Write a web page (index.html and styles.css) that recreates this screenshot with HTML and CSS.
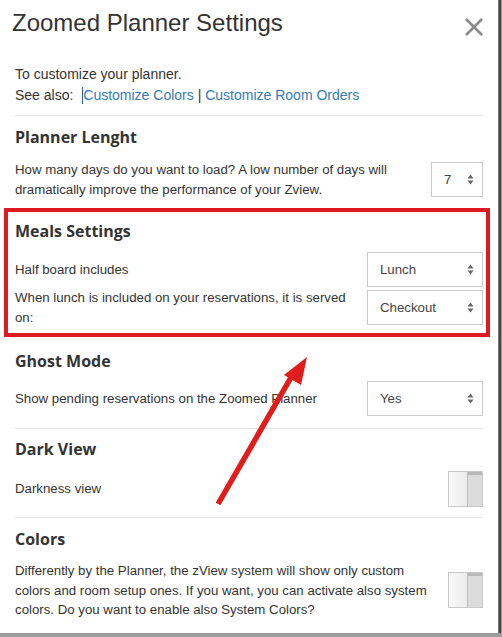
FILE: index.html
```html
<!DOCTYPE html>
<html>
<head>
<meta charset="utf-8">
<link rel="stylesheet" href="styles.css">
</head>
<body>
<div class="modal">
  <div class="modal-header">
    <h2 class="title">Zoomed Planner Settings</h2>
    <button class="close" aria-label="Close">
      <svg width="20" height="20" viewBox="0 0 20 20"><path d="M2 2 L18 18 M18 2 L2 18" stroke="#8a8a8a" stroke-width="2.6" fill="none"/></svg>
    </button>
  </div>
  <div class="modal-body">
    <div class="intro">
      <p>To customize your planner.</p>
      <p>See also: <span class="caret"></span><a href="#">Customize Colors</a> | <a href="#">Customize Room Orders</a></p>
    </div>
    <hr class="sep">
    <section class="sec sec-first">
      <h3 class="sec-title">Planner Lenght</h3>
      <div class="row">
        <div class="label">How many days do you want to load? A low number of days will dramatically improve the performance of your Zview.</div>
        <div class="select select-num"><span>7</span><svg class="arrows" width="7" height="11" viewBox="0 0 7 11"><path d="M0.5 4.5 L3.5 0.5 L6.5 4.5 Z M0.5 6.5 L3.5 10.5 L6.5 6.5 Z" fill="#666"/></svg></div>
      </div>
    </section>
    <section class="sec highlight">
      <h3 class="sec-title">Meals Settings</h3>
      <div class="row">
        <div class="label">Half board includes</div>
        <div class="select"><span>Lunch</span><svg class="arrows" width="7" height="11" viewBox="0 0 7 11"><path d="M0.5 4.5 L3.5 0.5 L6.5 4.5 Z M0.5 6.5 L3.5 10.5 L6.5 6.5 Z" fill="#666"/></svg></div>
      </div>
      <div class="row row-gap">
        <div class="label">When lunch is included on your reservations, it is served on:</div>
        <div class="select"><span>Checkout</span><svg class="arrows" width="7" height="11" viewBox="0 0 7 11"><path d="M0.5 4.5 L3.5 0.5 L6.5 4.5 Z M0.5 6.5 L3.5 10.5 L6.5 6.5 Z" fill="#666"/></svg></div>
      </div>
    </section>
    <section class="sec sec-ghost">
      <h3 class="sec-title">Ghost Mode</h3>
      <div class="row">
        <div class="label">Show pending reservations on the Zoomed Planner</div>
        <div class="select"><span>Yes</span><svg class="arrows" width="7" height="11" viewBox="0 0 7 11"><path d="M0.5 4.5 L3.5 0.5 L6.5 4.5 Z M0.5 6.5 L3.5 10.5 L6.5 6.5 Z" fill="#666"/></svg></div>
      </div>
    </section>
    <hr class="sep">
    <section class="sec sec-dark">
      <h3 class="sec-title">Dark View</h3>
      <div class="row">
        <div class="label">Darkness view</div>
        <div class="toggle"><span class="knob"></span><span class="track"></span></div>
      </div>
    </section>
    <hr class="sep">
    <section class="sec sec-colors">
      <h3 class="sec-title">Colors</h3>
      <div class="row">
        <div class="label">Differently by the Planner, the zView system will show only custom colors and room setup ones. If you want, you can activate also system colors. Do you want to enable also System Colors?</div>
        <div class="toggle"><span class="knob"></span><span class="track"></span></div>
      </div>
    </section>
  </div>
  <svg class="arrow" width="120" height="170" viewBox="0 0 120 170">
    <line x1="18" y1="174" x2="93" y2="44" stroke="#e01c1c" stroke-width="5.5"/>
    <polygon points="107,27 84,45 101,55" fill="#e01c1c"/>
  </svg>
</div>
</body>
</html>
```

FILE: styles.css
```css
* { box-sizing: border-box; }
html, body { margin: 0; padding: 0; }
body {
  background: #9c9c9c;
  width: 502px;
  height: 637px;
  overflow: hidden;
  font-family: "Liberation Sans", Arial, sans-serif;
  color: #333;
}
.modal {
  position: relative;
  width: 499px;
  height: 633px;
  background: #fff;
  border-right: 1px solid #777;
  box-shadow: 2px 0 0 #444;
}
.modal-header {
  display: flex;
  justify-content: space-between;
  align-items: flex-start;
  padding: 10px 14px 0 12px;
}
.title {
  margin: 0;
  font-size: 24px;
  line-height: 26px;
  font-weight: normal;
  color: #333;
}
.close {
  border: 0;
  background: none;
  padding: 0;
  margin-top: 7px;
  width: 20px;
  height: 20px;
  display: block;
}
.close svg { display: block; }
.modal-body {
  padding: 0 15px;
}
.intro {
  margin-top: 27px;
  font-size: 14px;
  line-height: 21px;
}
.intro p { margin: 0; }
.intro a { color: #337ab7; text-decoration: none; }
.caret {
  display: inline-block;
  width: 1px;
  height: 17px;
  margin-left: 5px;
  background: #2a5d9a;
  vertical-align: -4px;
}
.sep {
  margin: 9px 0 0;
  border: 0;
  border-top: 1px solid #e3e3e3;
  height: 0;
}
.sec {
  padding: 10px 0 0;
}
.sec-title {
  margin: 0 0 10px;
  font-family: "Open Sans", sans-serif;
  font-weight: 700;
  font-size: 16px;
  line-height: 22px;
  color: #333;
}
.sec-first .sec-title { margin-bottom: 12px; }
.row {
  display: flex;
  align-items: center;
  min-height: 35px;
}
.row-gap {
  margin-top: 1px;
  align-items: flex-start;
}
.row-gap .select { margin-top: 2px; }
.label {
  flex: 1;
  font-size: 13.25px;
  line-height: 19.5px;
  padding-right: 18px;
}
.select {
  position: relative;
  width: 116px;
  height: 35px;
  border: 1px solid #ccc;
  font-size: 13.25px;
  color: #444;
  display: flex;
  align-items: center;
  padding-left: 12px;
  flex-shrink: 0;
}
.select-num { width: 52px; }
.arrows {
  position: absolute;
  right: 8px;
  top: 11px;
}
.highlight {
  margin: 9px -7px 0 -11px;
  border: 4px solid #dc1a1f;
  padding: 8px 3px 6px 7px;
}
.highlight .sec-title { margin-bottom: 10px; }
.sec-ghost { padding-top: 13px; padding-bottom: 12px; }
.sec-ghost .sec-title { margin-bottom: 9px; }
.sec-dark { padding-top: 9px; padding-bottom: 10px; }
.sec-dark .sec-title { margin-bottom: 11px; }
.sec-colors { padding-top: 10px; }
.sec-colors .sec-title { margin-bottom: 11px; }
.sec-dark + .sep { margin-top: 0; }
.sec-ghost + .sep { margin-top: 0; }
.toggle {
  width: 35px;
  height: 36px;
  border: 1px solid #c8c8c8;
  display: flex;
  flex-shrink: 0;
}
.knob {
  width: 19px;
  background: linear-gradient(to right, #fafafa, #ececec);
  border-right: 1px solid #bdbdbd;
}
.track {
  flex: 1;
  background: #dcdcdc;
  border-top: 3px solid #b9b9b9;
}
.arrow {
  position: absolute;
  left: 200px;
  top: 330px;
  overflow: visible;
}
```
